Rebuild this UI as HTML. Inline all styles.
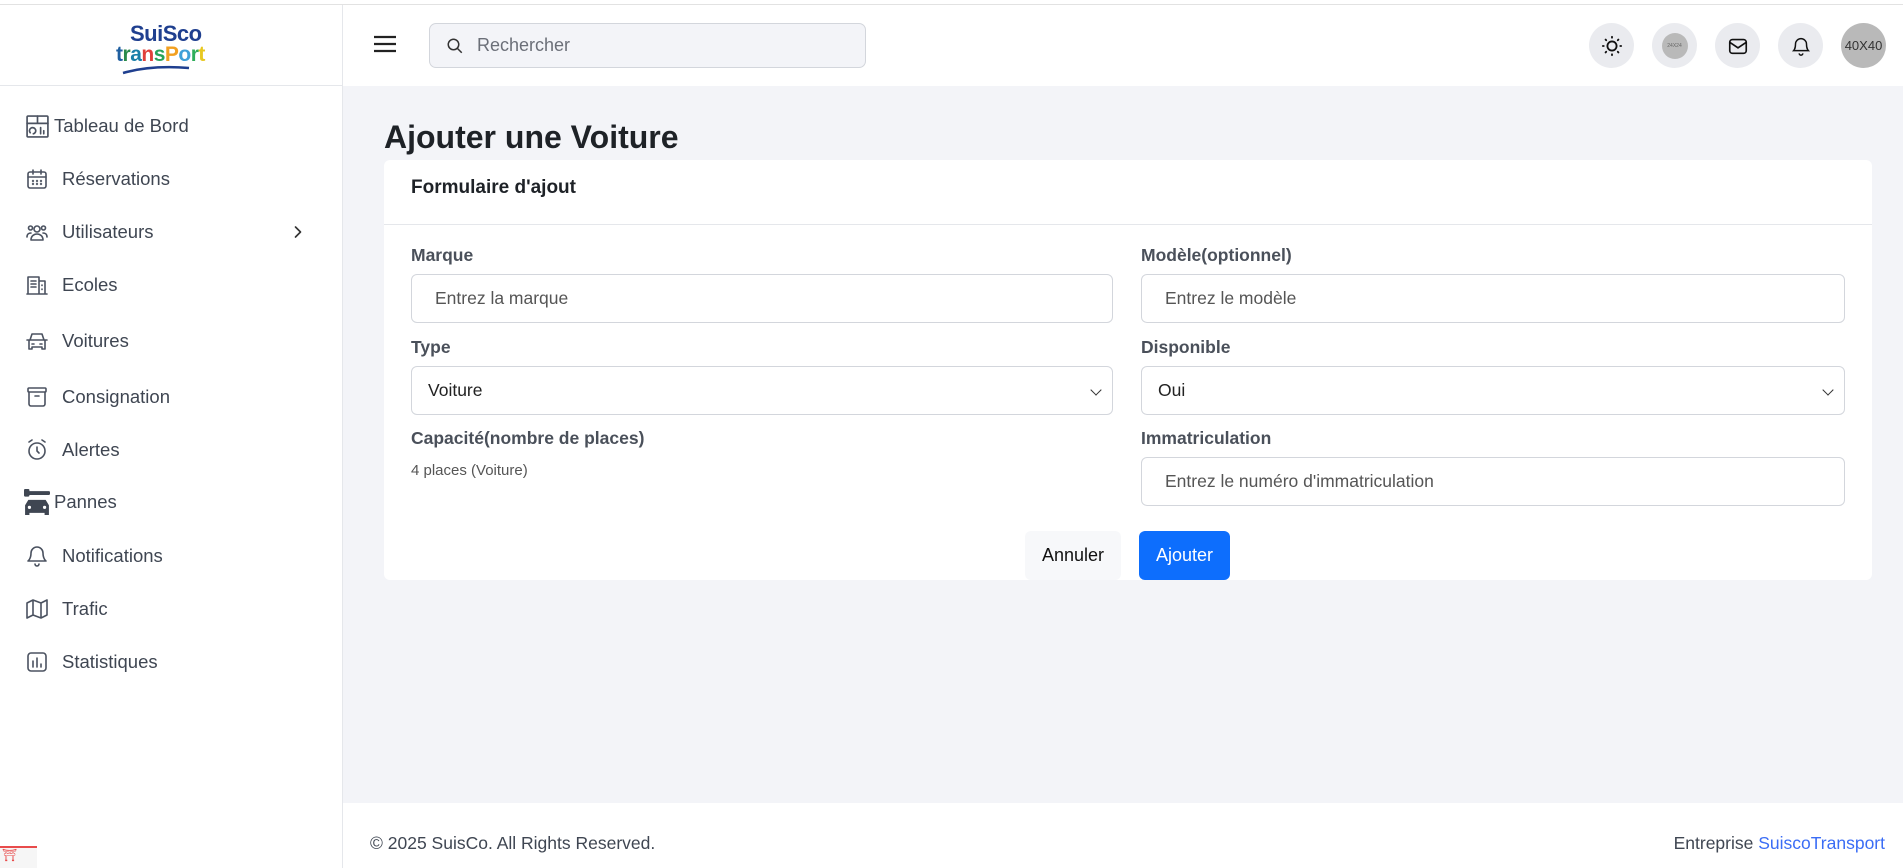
<!DOCTYPE html>
<html><head><meta charset="utf-8"><style>
*{box-sizing:border-box;margin:0;padding:0}
body{width:1903px;height:868px;overflow:hidden;font-family:"Liberation Sans",sans-serif;background:#f3f4f8;position:relative;color:#333}
.abs{position:absolute}
.side{left:0;top:5px;width:343px;height:863px;background:#fff;border-right:1px solid #e5e7eb}
.topline{left:0;top:0;width:1903px;height:5px;background:#fff;border-bottom:1px solid #e2e2e2}
.logoline{left:0;top:85px;width:343px;height:1px;background:#e5e7eb}
.header{left:343px;top:5px;width:1560px;height:81px;background:#fff}
.item{position:absolute;left:0;font-size:18.5px;color:#3f4652;display:flex;align-items:center}
.item svg{position:absolute;left:25px;width:24px;height:24px;fill:none;stroke:#4b5260;stroke-width:1.6;stroke-linecap:round;stroke-linejoin:round}
.item span{position:absolute;left:62px;white-space:nowrap}
.circ{position:absolute;top:23px;width:45px;height:45px;border-radius:50%;background:#eaebef;display:flex;align-items:center;justify-content:center}
.card{left:384px;top:160px;width:1488px;height:420px;background:#fff;border-radius:6px}
.lbl{position:absolute;font-size:17.5px;font-weight:bold;color:#4a505a}
.inp{position:absolute;height:49px;border:1px solid #d3d6dc;border-radius:6px;background:#fff;font-size:17.5px;color:#555;display:flex;align-items:center;padding-left:23px}
.sel{color:#222;padding-left:16px}
.sel:after{content:"";position:absolute;right:12px;top:19px;width:7px;height:7px;border-right:1.6px solid #333;border-bottom:1.6px solid #333;transform:rotate(45deg)}
</style></head><body>
<div class="abs topline"></div>
<div class="abs side">
  <div class="abs" style="left:113px;top:14px;width:110px;height:60px">
    <div style="position:absolute;left:17px;top:2px;font-size:22px;font-weight:bold;color:#1f3f8f;letter-spacing:-0.5px">SuiSco</div>
    <div style="position:absolute;left:3px;top:24px;font-size:21px;font-weight:bold;letter-spacing:-0.5px"><span style="color:#1f5fa0">t</span><span style="color:#2a8a4a">r</span><span style="color:#1a7fa8">a</span><span style="color:#e0403a">n</span><span style="color:#29a35a">s</span><span style="color:#f2a020">P</span><span style="color:#3fa0d8">o</span><span style="color:#2fae5a">r</span><span style="color:#e8c820">t</span></div>
    <svg style="position:absolute;left:8px;top:46px" width="70" height="10"><path d="M2 8 Q30 0 68 3" stroke="#1f3f8f" stroke-width="2.5" fill="none"/></svg>
  </div>
</div>
<div class="abs logoline"></div>
<div class="abs" style="left:0;top:99px;width:343px">
  <div class="item" style="top:27px"><svg viewBox="0 0 24 24" style="left:25px;width:25px;height:25px"><rect x="2" y="2" width="20" height="20" rx="1"/><path d="M2 9h20M12 2v7M5 18a3 3 0 1 1 3 1M15 13v6M18 16v3"/></svg><span style="left:54px">Tableau de Bord</span></div>
  <div class="item" style="top:80px"><svg viewBox="0 0 24 24"><rect x="3" y="5" width="18" height="16" rx="2"/><path d="M3 10h18M8 3v4M16 3v4"/><circle cx="8" cy="14" r=".4"/><circle cx="12" cy="14" r=".4"/><circle cx="16" cy="14" r=".4"/><circle cx="8" cy="17" r=".4"/><circle cx="12" cy="17" r=".4"/><circle cx="16" cy="17" r=".4"/></svg><span>Réservations</span></div>
  <div class="item" style="top:133px"><svg viewBox="0 0 24 24"><circle cx="12" cy="9" r="3"/><circle cx="5.5" cy="8" r="2"/><circle cx="18.5" cy="8" r="2"/><path d="M6 20c0-4 3-6 6-6s6 2 6 6zM2 17c0-3 2-4 4-4M22 17c0-3-2-4-4-4"/></svg><span>Utilisateurs</span><svg viewBox="0 0 24 24" style="left:288px;width:20px;height:20px;stroke:#333;stroke-width:2"><path d="M9 6l6 6-6 6"/></svg></div>
  <div class="item" style="top:186px"><svg viewBox="0 0 24 24"><path d="M3 21V4h11v17M14 8h6v13M2 21h20M6 8h5M6 11h5M6 14h5M17 12v.5M17 16v.5"/></svg><span>Ecoles</span></div>
  <div class="item" style="top:242px"><svg viewBox="0 0 24 24"><path d="M5 11l2-6h10l2 6M2 11h20M4 11v9h3v-2h10v2h3v-9M7 15h2M15 15h2"/></svg><span>Voitures</span></div>
  <div class="item" style="top:298px"><svg viewBox="0 0 24 24"><rect x="3" y="3" width="18" height="4" rx="1"/><path d="M4 7v12a2 2 0 0 0 2 2h12a2 2 0 0 0 2-2V7M10 11h4"/></svg><span>Consignation</span></div>
  <div class="item" style="top:351px"><svg viewBox="0 0 24 24"><circle cx="12" cy="13" r="8"/><path d="M12 9v4l2 2M4 4l3-2M20 4l-3-2"/></svg><span>Alertes</span></div>
  <div class="item" style="top:403px"><svg viewBox="0 0 24 24" style="left:24px;width:26px;height:28px;fill:#3f4652;stroke:none"><rect x="0" y="2" width="24" height="3.5" rx="1"/><rect x="0" y="0" width="5" height="7" rx="1"/><path d="M4 10h16l3 5v9h-4v-2H5v2H1v-9z"/><circle cx="5" cy="17" r="1.5" fill="#fff"/><circle cx="19" cy="17" r="1.5" fill="#fff"/></svg><span style="left:54px">Pannes</span></div>
  <div class="item" style="top:457px"><svg viewBox="0 0 24 24"><path d="M6 9a6 6 0 0 1 12 0c0 6 3 8 3 8H3s3-2 3-8M10 20a2 2 0 0 0 4 0"/></svg><span>Notifications</span></div>
  <div class="item" style="top:510px"><svg viewBox="0 0 24 24"><path d="M2 6l6-3 8 3 6-3v15l-6 3-8-3-6 3zM8 3v15M16 6v15"/></svg><span>Trafic</span></div>
  <div class="item" style="top:563px"><svg viewBox="0 0 24 24"><rect x="3" y="3" width="18" height="18" rx="3"/><path d="M8 17v-6M12 17V8M16 17v-3"/></svg><span>Statistiques</span></div>
</div>
<div class="abs" style="left:0;top:846px;width:37px;height:22px;border-top:2px solid #e84b4b;background:#f6f6f6;color:#e84b4b;font-size:12px;padding-left:2px">⛩</div>

<div class="abs header">
  <svg class="abs" style="left:30px;top:29px" width="24" height="20" viewBox="0 0 24 20"><path d="M1 3h22M1 10h22M1 17h22" stroke="#222" stroke-width="2.2"/></svg>
  <div class="abs" style="left:86px;top:18px;width:437px;height:45px;background:#f3f4f8;border:1px solid #d3d6dc;border-radius:7px">
    <svg class="abs" style="left:16px;top:13px" width="18" height="18" viewBox="0 0 24 24" fill="none" stroke="#333" stroke-width="2"><circle cx="10" cy="10" r="7"/><path d="M15 15l6 6"/></svg>
    <span class="abs" style="left:47px;top:11px;font-size:18px;color:#6b6f78">Rechercher</span>
  </div>
  <div class="circ" style="left:1246px;top:18px"><svg width="22" height="22" viewBox="0 0 24 24" fill="none" stroke="#111" stroke-width="2" stroke-linecap="round"><circle cx="12" cy="12" r="5"/><path d="M12 2v1M12 21v1M2 12h1M21 12h1M5 5l.7.7M18.3 18.3l.7.7M5 19l.7-.7M18.3 5.7l.7-.7"/></svg></div>
  <div class="circ" style="left:1309px;top:18px"><div style="width:26px;height:26px;border-radius:50%;background:#b9b9b9;font-size:5px;color:#666;display:flex;align-items:center;justify-content:center">24X24</div></div>
  <div class="circ" style="left:1372px;top:18px"><svg width="22" height="22" viewBox="0 0 24 24" fill="none" stroke="#111" stroke-width="1.8"><rect x="3" y="5" width="18" height="15" rx="3"/><path d="M3 8l9 6 9-6"/></svg></div>
  <div class="circ" style="left:1435px;top:18px"><svg width="22" height="22" viewBox="0 0 24 24" fill="none" stroke="#111" stroke-width="1.6"><path d="M6 10a6 6 0 0 1 12 0c0 5 2 7 2 7H4s2-2 2-7M10 20a2 2 0 0 0 4 0"/></svg></div>
  <div class="circ" style="left:1498px;top:18px;background:#b9b9b9;font-size:13px;color:#333">40X40</div>
</div>

<div class="abs" style="left:384px;top:119px;font-size:32px;font-weight:bold;color:#1e2227">Ajouter une Voiture</div>
<div class="abs card">
  <div class="abs" style="left:27px;top:17px;font-size:19px;font-weight:bold;color:#1e2227">Formulaire d'ajout</div>
  <div class="abs" style="left:0;top:64px;width:1488px;height:1px;background:#e5e7eb"></div>
  <div class="lbl" style="left:27px;top:85px">Marque</div>
  <div class="inp" style="left:27px;top:114px;width:702px">Entrez la marque</div>
  <div class="lbl" style="left:757px;top:85px">Modèle(optionnel)</div>
  <div class="inp" style="left:757px;top:114px;width:704px">Entrez le modèle</div>
  <div class="lbl" style="left:27px;top:177px">Type</div>
  <div class="inp sel" style="left:27px;top:206px;width:702px">Voiture</div>
  <div class="lbl" style="left:757px;top:177px">Disponible</div>
  <div class="inp sel" style="left:757px;top:206px;width:704px">Oui</div>
  <div class="lbl" style="left:27px;top:268px">Capacité(nombre de places)</div>
  <div class="abs" style="left:27px;top:302px;font-size:15px;color:#555">4 places (Voiture)</div>
  <div class="lbl" style="left:757px;top:268px">Immatriculation</div>
  <div class="inp" style="left:757px;top:297px;width:704px">Entrez le numéro d'immatriculation</div>
  <div class="abs" style="left:641px;top:371px;width:96px;height:49px;background:#f7f8fa;border-radius:6px;font-size:18px;color:#111;display:flex;align-items:center;justify-content:center">Annuler</div>
  <div class="abs" style="left:755px;top:371px;width:91px;height:49px;background:#0d6efd;border-radius:6px;font-size:18px;color:#fff;display:flex;align-items:center;justify-content:center">Ajouter</div>
</div>

<div class="abs" style="left:343px;top:803px;width:1560px;height:65px;background:#fff">
  <div class="abs" style="left:27px;top:30px;font-size:17.5px;color:#3f4652">© 2025 SuisCo. All Rights Reserved.</div>
  <div class="abs" style="right:18px;top:30px;font-size:17.5px;color:#3f4652">Entreprise <span style="color:#3b6df5">SuiscoTransport</span></div>
</div>
</body></html>
